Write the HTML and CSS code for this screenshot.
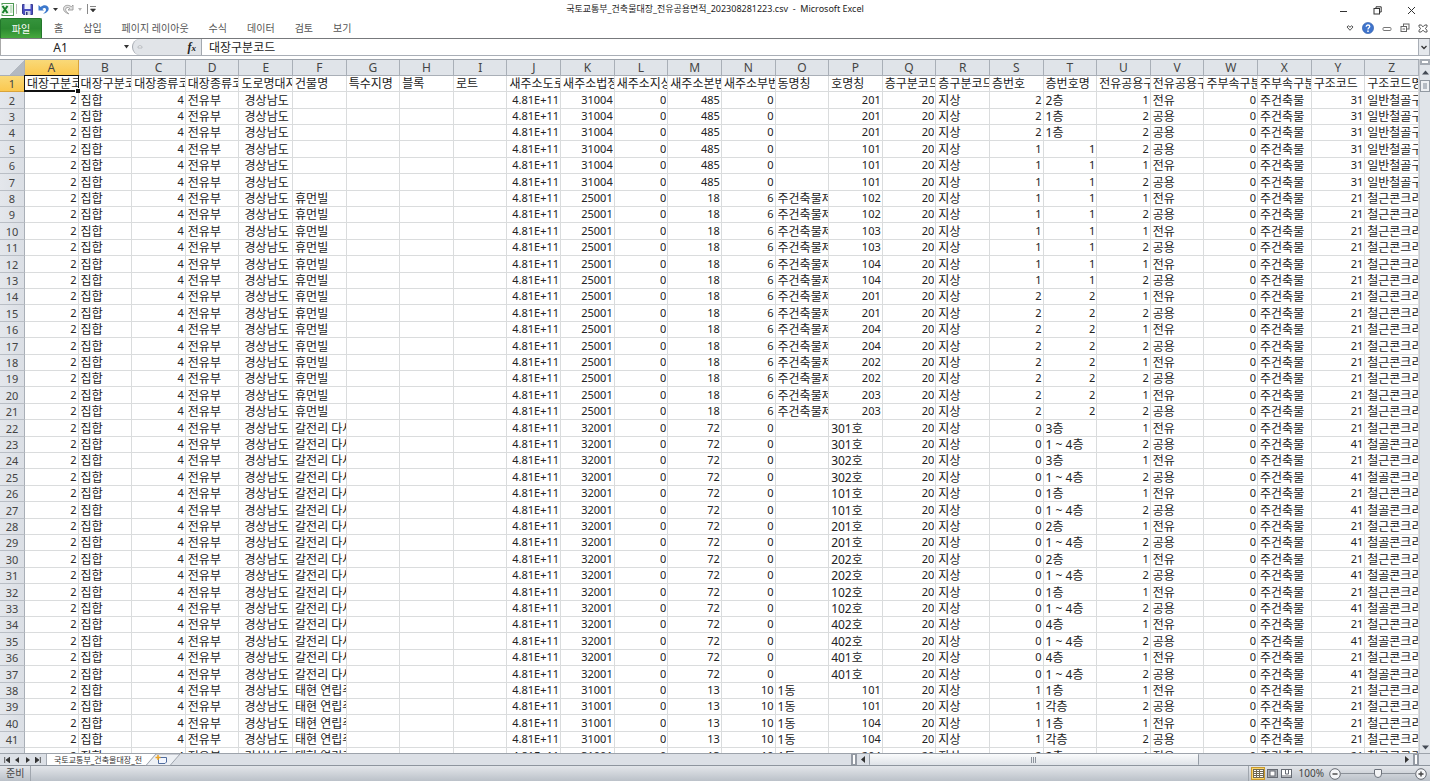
FILE: index.html
```html
<!DOCTYPE html>
<html lang="ko">
<head>
<meta charset="utf-8">
<title>국토교통부_건축물대장_전유공용면적_202308281223.csv - Microsoft Excel</title>
<link rel="stylesheet" href="styles.css">
</head>
<body>
<div class="app">
  <header class="titlebar">
    <div class="quick">
      <button class="icon-btn" aria-label="Excel"><svg width="13" height="13" viewBox="0 0 13 13"><rect x="1" y=".5" width="11.5" height="12" fill="#fff" stroke="#4f9a55"/><path d="M9 3h2.5M9 5h2.5M9 7h2.5M9 9h2.5" stroke="#8cc48e"/><rect x="0" y="2" width="8.5" height="9" fill="#e4f3e2"/><path d="M1.5 3l5 7M6.5 3l-5 7" stroke="#17802b" stroke-width="2"/></svg></button>
      <span class="sep"></span>
      <button class="icon-btn save" aria-label="저장"><svg width="11" height="11" viewBox="0 0 11 11"><path d="M.5.5h10v10h-9l-1-1z" fill="#4a4fc0" stroke="#3a3c94"/><rect x="2.5" y="0" width="6" height="5" fill="#f1f4fd"/><rect x="3" y="7" width="5.5" height="4" fill="#cdd3e8"/><rect x="4" y="8" width="1.5" height="3" fill="#333a7c"/></svg></button>
      <button class="icon-btn undo" aria-label="실행 취소"><svg width="11" height="11" viewBox="0 0 11 11"><path d="M.5 1v5.500h5.500L4.400 4.900C6 3.600 7.900 4 8 5.600 8 7.200 7 8.400 4.800 10 8 9.400 10.800 7.600 10.700 4.600 10.500 1.100 6 0 2.600 2.900z" fill="#3c78cc"/></svg></button>
      <button class="icon-btn caret" aria-label="실행 취소 목록"><svg width="5" height="3"><path d="M0 0h5L2.500 3z" fill="#333"/></svg></button>
      <button class="icon-btn redo" aria-label="다시 실행"><svg width="11" height="11" viewBox="0 0 11 11"><path d="M10 1v5H5l1.800-1.600C5 2.800 2.700 3.400 2.600 5.300 2.600 7 4 8.400 5.800 9.800 3 9 .4 7.400.5 4.600.7 1.300 5 .2 8.300 2.700z" fill="#e4e4e4" stroke="#999" stroke-width=".9"/></svg></button>
      <button class="icon-btn caret" aria-label="다시 실행 목록"><svg width="4" height="3"><path d="M0 0h4L2 3z" fill="#b5b5b5"/></svg></button>
      <span class="sep last"></span>
      <button class="icon-btn more" aria-label="빠른 실행 도구 모음 사용자 지정"><svg width="6" height="6"><path d="M0 .5h6M.5 3h5L3 6z" stroke="#333" stroke-width=".6" fill="#333"/></svg></button>
    </div>
    <h1 class="doc-title">국토교통부_건축물대장_전유공용면적_202308281223.csv&nbsp; -&nbsp; Microsoft Excel</h1>
    <div class="window-btns">
      <button class="icon-btn" aria-label="최소화"><svg width="9" height="9"><path d="M1 5.500h7" stroke="#333"/></svg></button>
      <button class="icon-btn" aria-label="이전 크기로 복원"><svg width="9" height="9" fill="none" stroke="#333"><rect x="1" y="2.500" width="5.500" height="5.500"/><path d="M3 2.500V.8h5.200V6H6.500"/></svg></button>
      <button class="icon-btn" aria-label="닫기"><svg width="9" height="9"><path d="M1 1l7 7M8 1L1 8" stroke="#333"/></svg></button>
    </div>
  </header>

  <nav class="ribbon">
    <button class="file-tab">파일</button>
    <div class="tabs">
      <button>홈</button><button>삽입</button><button>페이지 레이아웃</button><button>수식</button><button>데이터</button><button>검토</button><button>보기</button>
    </div>
    <div class="book-btns">
      <button class="icon-btn" aria-label="리본 최소화"><svg width="8" height="8" fill="#fff" stroke="#555"><path d="M1 3l1.200-1.300L4 3.200l1.800-1.500L7 3 4 6.300z"/></svg></button>
      <button class="icon-btn" aria-label="도움말"><svg width="12" height="12"><circle cx="6" cy="6" r="5.600" fill="#3f74cc" stroke="#2d5ba8" stroke-width=".6"/><path d="M4.200 4.700C4.200 2.400 7.800 2.500 7.800 4.600 7.800 5.800 6 5.800 6 7.400" stroke="#fff" stroke-width="1.300" fill="none"/><circle cx="6" cy="9.200" r=".85" fill="#fff"/></svg></button>
      <button class="icon-btn" aria-label="통합 문서 최소화"><svg width="10" height="8"><rect x="1" y="3.500" width="8" height="3" rx="1" fill="#fff" stroke="#777"/></svg></button>
      <button class="icon-btn" aria-label="통합 문서 복원"><svg width="10" height="10" fill="#fff" stroke="#666"><rect x="3.500" y="1" width="5.500" height="5"/><rect x="1" y="3.500" width="5.500" height="5"/><path d="M2.500 6h2.500" /></svg></button>
      <button class="icon-btn" aria-label="통합 문서 닫기"><svg width="10" height="9" fill="#fff" stroke="#555"><path d="M1 1h2.200L5 2.800 6.800 1H9v1.800L7.200 4.500 9 6.200V8H6.800L5 6.200 3.200 8H1V6.200l1.800-1.700L1 2.800z"/></svg></button>
    </div>
  </nav>

  <section class="formula-bar">
    <input class="name-box" aria-label="이름 상자" value="A1">
    <button class="icon-btn name-drop" aria-label="이름 목록"><svg width="5" height="4"><path d="M0 0h5L2.500 3.500z" fill="#333"/></svg></button>
    <div class="fx-area"><svg class="grip" width="6" height="6"><path d="M1 4V2.500Q3 .5 5 2.500V4z" fill="#eee" stroke="#aeb3b9" stroke-width=".8"/></svg><button class="fx" aria-label="함수 삽입"><i>f</i><small>x</small></button></div>
    <input class="formula" aria-label="수식 입력줄" value="대장구분코드">
    <button class="icon-btn expand" aria-label="수식 입력줄 확장"><svg width="6" height="5"><path d="M.5 1L3 3.500 5.500 1" fill="none" stroke="#333" stroke-width="1.300"/></svg></button>
  </section>

  <main class="workspace">
    <div class="sheet">
      <table class="grid" id="grid"></table>
    </div>
    <div class="vscroll">
      <span class="v-split"></span>
      <button class="icon-btn" aria-label="위로 스크롤"><svg width="7" height="5"><path d="M0 4.500h7L3.500 .5z" fill="#444b55"/></svg></button>
      <span class="v-thumb"></span>
      <button class="icon-btn v-down" aria-label="아래로 스크롤"><svg width="7" height="5"><path d="M0 .5h7L3.500 4.500z" fill="#444b55"/></svg></button>
    </div>
  </main>

  <div class="sheet-bar">
    <div class="sheet-nav">
      <button class="icon-btn" aria-label="첫 시트"><svg width="6" height="6"><path d="M.7 0v6M6 0v6L2 3z" stroke="#333" stroke-width=".8" fill="#333"/></svg></button>
      <button class="icon-btn" aria-label="이전 시트"><svg width="5" height="6"><path d="M4 0v6L0 3z" fill="#333"/></svg></button>
      <button class="icon-btn" aria-label="다음 시트"><svg width="5" height="6"><path d="M1 0v6l4-3z" fill="#333"/></svg></button>
      <button class="icon-btn" aria-label="마지막 시트"><svg width="6" height="6"><path d="M5.300 0v6M0 0v6l4-3z" stroke="#333" stroke-width=".8" fill="#333"/></svg></button>
    </div>
    <button class="sheet-tab">국토교통부_건축물대장_전</button>
    <svg class="tab-edge" width="38" height="12" viewBox="0 0 38 12"><path d="M0 0v12l10-12z" fill="#fff"/><path d="M0 11.500h1L11 0h24L25 11.500H1" fill="#eef1f5" stroke="#8f969f" stroke-width=".8"/><path d="M13.500 3.500h8v4.500l-1.500 1.500h-6.500z" fill="#f4f7ff" stroke="#506d9e"/><path d="M10.500 3.500h5M13 1v5" stroke="#eda526" stroke-width="1.500"/></svg>
    <span class="tab-space"></span>
    <div class="hscroll">
      <span class="h-split"></span>
      <button class="icon-btn h-arrow" aria-label="왼쪽으로 스크롤"><svg width="4" height="7"><path d="M4 0v7L0 3.500z" fill="#333"/></svg></button>
      <div class="h-track"><span class="h-thumb"><svg width="6" height="6"><path d="M.5 0v6M2.500 0v6M4.500 0v6" stroke="#8d949d"/></svg></span></div>
      <button class="icon-btn h-arrow" aria-label="오른쪽으로 스크롤"><svg width="4" height="7"><path d="M0 0v7l4-3.500z" fill="#333"/></svg></button>
      <span class="h-split"></span>
    </div>
    <span class="corner"></span>
  </div>

  <footer class="status">
    <span class="ready">준비</span>
    <div class="views">
      <button class="view on" aria-label="기본"><svg width="11" height="9"><rect width="11" height="9" fill="#6f6950"/><path d="M1 1h2v1H1zM4 1h2v1H4zM7 1h3v1H7zM1 3h2v1H1zM4 3h2v1H4zM7 3h3v1H7zM1 5h2v1H1zM4 5h2v1H4zM7 5h3v1H7zM1 7h2v1H1zM4 7h2v1H4zM7 7h3v1H7z" fill="#fff"/></svg></button>
      <button class="view" aria-label="페이지 레이아웃"><svg width="11" height="9"><rect x=".5" y=".5" width="10" height="8" fill="#a8adb3" stroke="#666b73"/><rect x="3" y="2" width="5" height="5" fill="#fff" stroke="#666b73"/></svg></button>
      <button class="view" aria-label="페이지 나누기 미리 보기"><svg width="11" height="9"><rect x=".5" y=".5" width="10" height="8" fill="#fff" stroke="#666b73"/><path d="M1 7h9M4.500 1v4M7.500 1v4M4.500 5h3" stroke="#666b73"/></svg></button>
      <button class="zoom-value">100%</button>
      <button class="icon-btn" aria-label="축소"><svg width="12" height="12"><circle cx="6" cy="6" r="5.300" fill="#f5f6f8" stroke="#666b73"/><path d="M3.500 6h5" stroke="#444" stroke-width="1.400"/></svg></button>
      <input class="zoom" type="range" min="0" max="100" value="50" aria-label="확대/축소">
      <button class="icon-btn" aria-label="확대"><svg width="12" height="12"><circle cx="6" cy="6" r="5.300" fill="#f5f6f8" stroke="#666b73"/><path d="M3.500 6h5M6 3.500v5" stroke="#444" stroke-width="1.400"/></svg></button>
    </div>
  </footer>
</div>
<script src="grid.js"></script>
</body>
</html>
```
FILE: styles.css
```css
* { box-sizing: border-box; }
body {
  margin: 0;
  font-family: "Noto Sans", "Noto Sans CJK KR", sans-serif;
  font-size: 12px;
  color: #222;
  background: #fff;
}
button, input { font: inherit; color: inherit; margin: 0; padding: 0; border: 0; background: none; }
.app { display: flex; flex-direction: column; height: 100vh; overflow: hidden; }
.icon-btn { display: flex; align-items: center; justify-content: center; flex: none; }
svg { display: block; flex: none; }

.titlebar { display: grid; grid-template-columns: 1fr auto 1fr; align-items: center; height: 18px; flex: none; }
.quick { display: flex; align-items: center; padding-left: 1px; height: 16px; }
.sep { width: 1px; height: 10px; background: #bbb; margin-left: 2px; }
.save { margin-left: 5px; }
.undo { margin-left: 5px; }
.caret { margin-left: 4px; }
.redo { margin-left: 5px; }
.sep.last { margin-left: 5px; background: #888; }
.more { margin-left: 2px; }
.doc-title { margin: 0; font-size: 9px; font-weight: 400; line-height: 18px; white-space: nowrap; }
.window-btns { display: flex; justify-content: flex-end; gap: 25px; padding: 2px 14px 0 0; }

.ribbon { display: flex; align-items: stretch; height: 20px; flex: none; font-size: 10px; color: #555; }
.file-tab { width: 42px; background: linear-gradient(#35933c, #2c8a31 50%, #46a93e); border-radius: 2px 2px 0 0; border: 1px solid #23772b; border-bottom: 0; color: #fff; line-height: 16px; }
.tabs { display: flex; gap: 20px; padding-left: 12px; line-height: 18px; }
.book-btns { display: flex; align-items: center; gap: 8px; margin-left: auto; padding-right: 2px; }

.formula-bar { display: flex; height: 18px; flex: none; border-top: 1px solid #77797c; border-bottom: 1px solid #a9aeb6; }
.name-box { width: 120px; text-align: center; border-left: 1px solid #aaa; }
.name-drop { width: 12px; }
.fx-area { display: flex; align-items: center; justify-content: space-between; width: 70px; padding: 0 5px 0 4px; background: #e1e4e8; border: solid #a3a8af; border-width: 0 1px; border-radius: 8px 0 0 8px; }
.fx { font-family: "Liberation Serif", serif; font-weight: 700; font-size: 12px; line-height: 14px; }
.fx small { font-size: 9px; font-style: italic; }
.formula { flex: 1; min-width: 0; padding-left: 7px; }
.expand { width: 12px; background: #e5e8ec; border: 1px solid #a9aeb6; border-width: 0 1px; }

.workspace { display: flex; flex: 1; min-height: 0; margin-top: 3px; }
.sheet { flex: 1; min-width: 0; overflow: hidden; border-top: 1px solid #9da3ab; }
.grid { width: 100%; table-layout: fixed; border-collapse: separate; border-spacing: 0; }
.grid tr { height: 16px; }
.grid tbody tr:nth-child(5n+2), .grid tbody tr:nth-child(5n) { height: 17px; }
.grid th, .grid td { padding: 0; overflow: hidden; white-space: pre; line-height: 15px; border: solid #dadcdd; border-width: 0 1px 1px 0; }
.grid td { padding-left: 2px; }
.grid div { height: 15px; overflow: hidden; }
.grid th { font-weight: 400; color: #444; background: #e0e4e9; border-color: #a9afb7; text-align: center; }
.grid tbody th { font-size: 11px; background: linear-gradient(90deg, #e4e7ec, #dbdfe5); border-bottom-color: #b9bec5; }
.grid thead .all { width: 25px; background: linear-gradient(135deg, #e0e4e9 62%, #b3b9c1 62%); }
.grid thead .picked, .grid tbody .picked { background: linear-gradient(#f9d978, #fbc84f); border-color: #d9a33a; }
.grid .num { text-align: right; font-size: 11px; line-height: 14px; padding-right: 1px; }
.grid .active { position: relative; overflow: visible; }
.active::before { content: ""; position: absolute; inset: -1px; border: 1px solid #111; border-bottom-width: 2px; }
.active::after { content: ""; position: absolute; right: -2px; bottom: -2px; width: 4px; height: 4px; background: #111; border: solid #fff; border-width: 1px 0 0 1px; }

.vscroll { display: flex; flex-direction: column; align-items: center; width: 11px; background: #e0e4e9; border-left: 1px solid #c6cad0; }
.v-split { width: 10px; height: 6px; margin-bottom: 5px; background: #fff; border: 2px solid #a4aab2; }
.v-thumb { width: 10px; height: 12px; margin-top: 5px; background: #b6bcc4; border: 3px solid #eef0f3; outline: 1px solid #9299a2; outline-offset: -1px; }
.v-down { margin-top: auto; padding-bottom: 3px; }

.sheet-bar { display: flex; height: 13px; flex: none; background: #dce0e6; border-top: 1px solid #9da3ab; border-bottom: 1px solid #8e959e; }
.sheet-nav { display: flex; align-items: center; justify-content: space-between; width: 47px; padding: 0 5px 0 4px; border-right: 1px solid #a5abb3; }
.sheet-tab { background: #fff; padding: 0 3px 0 7px; font-size: 8px; line-height: 11px; color: #333; white-space: nowrap; }
.tab-space { flex: 1; }
.hscroll { display: flex; align-items: stretch; width: 568px; }
.h-split { width: 6px; background: #fff; border: 2px solid #949aa3; border-width: 1px 2px; }
.h-arrow { width: 12px; }
.h-track { flex: 1; display: flex; }
.h-thumb { display: flex; align-items: center; justify-content: center; width: 62%; background: linear-gradient(#fafbfc, #dfe3e8); border: 1px solid #959ca5; border-width: 0 1px; border-radius: 1px; }
.corner { width: 11px; }

.status { display: flex; align-items: center; justify-content: space-between; height: 15px; flex: none; background: linear-gradient(#e3e6ea, #bbc1c9); font-size: 10px; color: #444; }
.ready { padding: 0 6px; line-height: 15px; border-right: 1px solid #a0a6ae; }
.views { display: flex; align-items: center; padding-right: 3px; border-left: 1px solid #a0a6ae; }
.view { display: flex; align-items: center; justify-content: center; width: 14px; height: 13px; }
.view.on { background: #fbd66b; border: 1px solid #c99a2c; margin-left: 2px; }
.zoom-value { width: 36px; padding-right: 5px; line-height: 15px; text-align: right; }
.zoom { appearance: none; width: 74px; height: 11px; background: linear-gradient(#8b9199, #8b9199) center / 100% 1px no-repeat; }
.zoom::-webkit-slider-thumb { appearance: none; width: 8px; height: 9px; background: #f4f5f7; border: 1px solid #6c727b; border-radius: 1px 1px 4px 4px; }
```
FILE: grid.js
```js
const headers = ["대장구분코드", "대장구분코드명", "대장종류코드", "대장종류코드명", "도로명대지위치", "건물명", "특수지명", "블록", "로트",
  "새주소도로코드", "새주소법정동코드", "새주소지상지하코드", "새주소본번", "새주소부번", "동명칭", "호명칭", "층구분코드", "층구분코드명",
  "층번호", "층번호명", "전유공용구분코드", "전유공용구분코드명", "주부속구분코드", "주부속구분코드명", "구조코드", "구조코드명"];

// Each building: name, legal-district code, main no., sub no., block name, then units [unit, floor no., floor name, use, structure].
const buildings = [
  ["", 31004, 485, 0, "", [
    [201, 2, "2층", 1, 31], [201, 2, "1층", 2, 31], [201, 2, "1층", 2, 31],
    [101, 1, 1, 2, 31], [101, 1, 1, 1, 31], [101, 1, 1, 2, 31]]],
  ["휴먼빌", 25001, 18, 6, "주건축물제1동",
    [102, 103, 104, 201, 204, 202, 203].flatMap(u => {
      const f = Math.floor(u / 100);
      return [[u, f, f, 1, 21], [u, f, f, 2, 21]];
    })],
  ["갈전리 다세대주택", 32001, 72, 0, "",
    [301, 302, 101, 201, 202, 102, 402, 401].flatMap(u => [
      [u + "호", 0, Math.floor(u / 100) + "층", 1, 21], [u + "호", 0, "1 ~ 4층", 2, 41]])],
  ["태현 연립주택", 31001, 13, 10, "1동", [
    [101, 1, "1층", 1, 21], [101, 1, "각층", 2, 21], [104, 1, "1층", 1, 21], [104, 1, "각층", 2, 21], [204, 2, "2층", 1, 21]]]
];
const uses = { 1: "전유", 2: "공용" };
const structures = { 21: "철근콘크리트구조", 31: "일반철골구조", 41: "철골콘크리트구조" };

const rows = [headers];
for (const [name, district, main, sub, block, units] of buildings) {
  for (const [unit, floor, floorName, use, structure] of units) {
    rows.push([2, "집합", 4, "전유부", " 경상남도", name, "", "", "", "4.81E+11", district, 0, main, sub, block, unit,
      20, "지상", floor, floorName, use, uses[use], 0, "주건축물", structure, structures[structure]]);
  }
}

const isNumeric = v => typeof v === "number" || v === "4.81E+11";
const letters = headers.map((_, i) => String.fromCharCode(65 + i));
const head = `<thead><tr><th class="all"></th>${letters.map((l, i) => `<th scope="col"${i ? "" : ' class="picked"'}>${l}</th>`).join("")}</tr></thead>`;
const body = rows.map((row, r) => {
  const cells = row.map((v, c) => {
    const cls = r === 0 && c === 0 ? "active" : isNumeric(v) ? "num" : "";
    return `<td${cls ? ` class="${cls}"` : ""}><div>${v}</div></td>`;
  }).join("");
  return `<tr><th scope="row"${r ? "" : ' class="picked"'}>${r + 1}</th>${cells}</tr>`;
}).join("");
document.getElementById("grid").innerHTML = `${head}<tbody>${body}</tbody>`;
```
